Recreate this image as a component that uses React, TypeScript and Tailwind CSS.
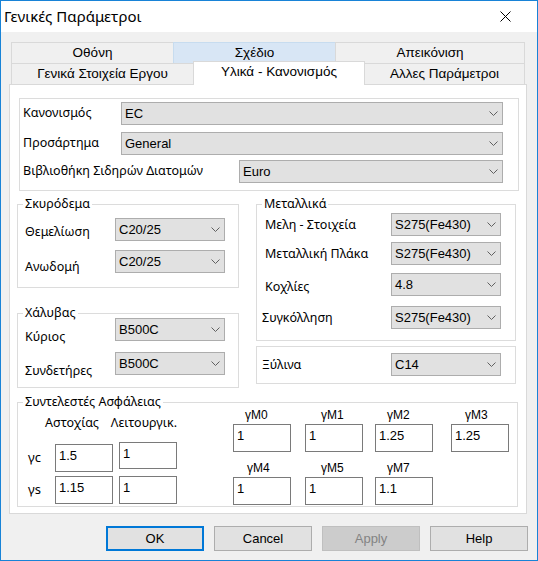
import React from "react";

const SEGOE = "font-['Noto_Sans',sans-serif]";
const ARIAL = "font-['Liberation_Sans',Arial,sans-serif]";

function Chevron() {
  return (
    <svg width="9" height="5" viewBox="0 0 9 5" className="shrink-0">
      <polyline points="0.5,0.5 4.5,4.5 8.5,0.5" fill="none" stroke="#606060" strokeWidth="1" />
    </svg>
  );
}

function Combo({ value, w }: { value: string; w: string }) {
  return (
    <div
      className={`${w} h-[23px] shrink-0 flex items-center justify-between border border-[#adadad] bg-[#e1e1e1] pl-[3px] pr-[4px] ${ARIAL} text-[13px] text-black`}
    >
      <span>{value}</span>
      <Chevron />
    </div>
  );
}

function Field({ value, h = "h-[28px]", extra = "" }: { value: string; h?: string; extra?: string }) {
  return (
    <div
      className={`w-[58px] ${h} shrink-0 border border-[#7a7a7a] bg-white px-[3px] pt-[3px] ${ARIAL} text-[13px] leading-[16px] text-black ${extra}`}
    >
      {value}
    </div>
  );
}

function Legend({ children }: { children: React.ReactNode }) {
  return (
    <legend className={`ml-[5px] px-[2px] ${SEGOE} text-[12.5px] leading-[10px] text-black`}>{children}</legend>
  );
}

const metalRows = [
  { label: "Μελη - Στοιχεία", value: "S275(Fe430)", mt: "mt-[4px]", pl: "pl-[8px]", pt: "" },
  { label: "Μεταλλική Πλάκα", value: "S275(Fe430)", mt: "mt-[6px]", pl: "pl-[8px]", pt: "" },
  { label: "Κοχλίες", value: "4.8", mt: "mt-[8px]", pl: "pl-[8px]", pt: "pt-[5px]" },
  { label: "Συγκόλληση", value: "S275(Fe430)", mt: "mt-[10px]", pl: "pl-[5px]", pt: "" },
];

const gammaRow1 = [
  { label: "γM0", value: "1", ml: "", pl: "pl-[12px]" },
  { label: "γM1", value: "1", ml: "ml-[14px]", pl: "pl-[16px]" },
  { label: "γM2", value: "1.25", ml: "ml-[12px]", pl: "pl-[12px]" },
  { label: "γM3", value: "1.25", ml: "ml-[18px]", pl: "pl-[14px]" },
];

const gammaRow2 = [
  { label: "γM4", value: "1", ml: "", pl: "pl-[14px]" },
  { label: "γM5", value: "1", ml: "ml-[14px]", pl: "pl-[16px]" },
  { label: "γM7", value: "1.1", ml: "ml-[12px]", pl: "pl-[12px]" },
];

function GammaCell({ label, value, ml, pl, mt }: { label: string; value: string; ml: string; pl: string; mt: string }) {
  return (
    <div className={`flex flex-col ${ml}`}>
      <div className={`${pl} ${mt} ${ARIAL} text-[12px] leading-[16px] text-black`}>{label}</div>
      <Field value={value} extra="mt-[1px]" />
    </div>
  );
}

export default function App() {
  return (
    <div className="w-[538px] h-[561px] flex flex-col border border-[#1883d7] bg-[#f0f0f0] overflow-hidden">
      {/* title bar */}
      <div className="h-[31px] shrink-0 flex items-center justify-between bg-white pl-[3px] pr-[26px]">
        <span className={`${SEGOE} text-[15px] text-black`}>Γενικές Παράμετροι</span>
        <svg width="11" height="11" viewBox="0 0 11 11">
          <path d="M0.5 0.5 L10.5 10.5 M10.5 0.5 L0.5 10.5" stroke="#000" strokeWidth="1" />
        </svg>
      </div>

      {/* tabs */}
      <div className={`mt-[10px] ml-[10px] w-[514px] flex flex-col ${ARIAL} text-[13.5px] text-black`}>
        <div className="flex h-[21px]">
          <div className="w-[162px] flex items-center justify-center border-t border-l border-[#d9d9d9]">Οθόνη</div>
          <div className="w-[162px] flex items-center justify-center border-t border-l border-[#c7dcef] bg-[#d8e6f5]">Σχέδιο</div>
          <div className="w-[190px] flex items-center justify-center border-t border-l border-r border-[#d9d9d9]">Απεικόνιση</div>
        </div>
        <div className="flex h-[21px] items-start">
          <div className="w-[182px] h-[21px] flex items-center justify-center border-t border-l border-[#d9d9d9]">Γενικά Στοιχεία Εργου</div>
          <div className="relative z-10 w-[172px] h-[24px] -mt-[2px] flex items-center justify-center border-t border-l border-r border-[#d9d9d9] bg-white pb-[2px]">
            Υλικά - Κανονισμός
          </div>
          <div className="w-[160px] h-[21px] flex items-center justify-center border-t border-r border-[#d9d9d9]">Αλλες Παράμετροι</div>
        </div>
      </div>

      {/* panel */}
      <div className={`ml-[8px] w-[518px] h-[430px] shrink-0 flex flex-col border border-[#d9d9d9] bg-white ${SEGOE} text-[12.5px] text-black`}>
        {/* code box */}
        <div className="ml-[9px] mt-[13px] w-[500px] h-[93px] flex flex-col border border-[#dcdcdc] pl-[3px] pt-[3px]">
          <div className="flex items-center h-[23px]">
            <span className="w-[98px]">Κανονισμός</span>
            <Combo value="EC" w="w-[382px]" />
          </div>
          <div className="flex items-center h-[23px] mt-[7px]">
            <span className="w-[98px] pb-[1px]">Προσάρτημα</span>
            <Combo value="General" w="w-[382px]" />
          </div>
          <div className="flex items-center h-[23px] mt-[5px]">
            <span className="w-[216px]">Βιβλιοθήκη Σιδηρών Διατομών</span>
            <Combo value="Euro" w="w-[264px]" />
          </div>
        </div>

        {/* middle area */}
        <div className="flex mt-[8px] h-[189px]">
          <div className="ml-[7px] w-[222px] flex flex-col">
            <fieldset className="h-[89px] border border-[#dcdcdc] p-0 m-0 min-w-0">
              <Legend>Σκυρόδεμα</Legend>
              <div className="flex items-start h-[23px] mt-[9px]">
                <span className="w-[97px] pl-[7px] pt-[6px] leading-[16px]">Θεμελίωση</span>
                <Combo value="C20/25" w="w-[110px]" />
              </div>
              <div className="flex items-start h-[23px] mt-[9px]">
                <span className="w-[97px] pl-[7px] pt-[9px] leading-[16px]">Ανωδομή</span>
                <Combo value="C20/25" w="w-[110px]" />
              </div>
            </fieldset>
            <fieldset className="mt-[20px] h-[80px] border border-[#dcdcdc] p-0 m-0 min-w-0">
              <Legend>Χάλυβας</Legend>
              <div className="flex items-start h-[23px]">
                <span className="w-[97px] pl-[7px] pt-[11px] leading-[16px]">Κύριος</span>
                <Combo value="B500C" w="w-[110px]" />
              </div>
              <div className="flex items-start h-[23px] mt-[11px]">
                <span className="w-[97px] pl-[7px] pt-[11px] leading-[16px]">Συνδετήρες</span>
                <Combo value="B500C" w="w-[110px]" />
              </div>
            </fieldset>
          </div>

          <div className="ml-[17px] w-[260px] flex flex-col">
            <fieldset className="h-[142px] border border-[#dcdcdc] p-0 m-0 min-w-0">
              <Legend>Μεταλλικά</Legend>
              {metalRows.map((r) => (
                <div key={r.label} className={`flex items-center h-[23px] ${r.mt}`}>
                  <span className={`w-[134px] ${r.pl} ${r.pt} leading-[16px]`}>{r.label}</span>
                  <Combo value={r.value} w="w-[110px]" />
                </div>
              ))}
            </fieldset>
            <div className="mt-[5px] h-[38px] border border-[#dcdcdc] pt-[6px]">
              <div className="flex items-center h-[23px]">
                <span className="w-[134px] pl-[5px] leading-[16px]">Ξύλινα</span>
                <Combo value="C14" w="w-[110px]" />
              </div>
            </div>
          </div>
        </div>

        {/* safety factors */}
        <fieldset className="ml-[7px] mt-[9px] w-[501px] h-[110px] border border-[#dcdcdc] p-0 m-0 min-w-0">
          <Legend>Συντελεστές Ασφάλειας</Legend>
          <div className="flex">
            <div className="flex flex-col w-[159px]">
              <div className="flex mt-[8px] leading-[16px]">
                <span className="ml-[27px] w-[70px]">Αστοχίας</span>
                <span>Λειτουργικ.</span>
              </div>
              <div className="flex items-start mt-[11px]">
                <span className="w-[37px] pl-[10px] pt-[7px] leading-[16px] text-[13px]">γc</span>
                <Field value="1.5" extra="mt-[2px]" />
                <Field value="1" h="h-[27px]" extra="ml-[6px]" />
              </div>
              <div className="flex items-start mt-[4px]">
                <span className="w-[37px] pl-[10px] pt-[5px] leading-[16px] text-[13px]">γs</span>
                <Field value="1.15" />
                <Field value="1" extra="ml-[6px]" />
              </div>
            </div>
            <div className="ml-[56px] flex flex-col">
              <div className="flex">
                {gammaRow1.map((c) => (
                  <GammaCell key={c.label} {...c} mt="" />
                ))}
              </div>
              <div className="flex">
                {gammaRow2.map((c) => (
                  <GammaCell key={c.label} {...c} mt="mt-[8px]" />
                ))}
              </div>
            </div>
          </div>
        </fieldset>
      </div>

      {/* buttons */}
      <div className={`flex gap-[10px] mt-[12px] ml-[105px] ${ARIAL} text-[13px]`}>
        <div className="w-[98px] h-[25px] flex items-center justify-center border-2 border-[#0078d7] bg-[#e1e1e1] text-black">OK</div>
        <div className="w-[98px] h-[25px] flex items-center justify-center border border-[#adadad] bg-[#e1e1e1] text-black">Cancel</div>
        <div className="w-[98px] h-[25px] flex items-center justify-center border border-[#bfbfbf] bg-[#cccccc] text-[#838383]">Apply</div>
        <div className="w-[98px] h-[25px] flex items-center justify-center border border-[#adadad] bg-[#e1e1e1] text-black">Help</div>
      </div>
    </div>
  );
}
